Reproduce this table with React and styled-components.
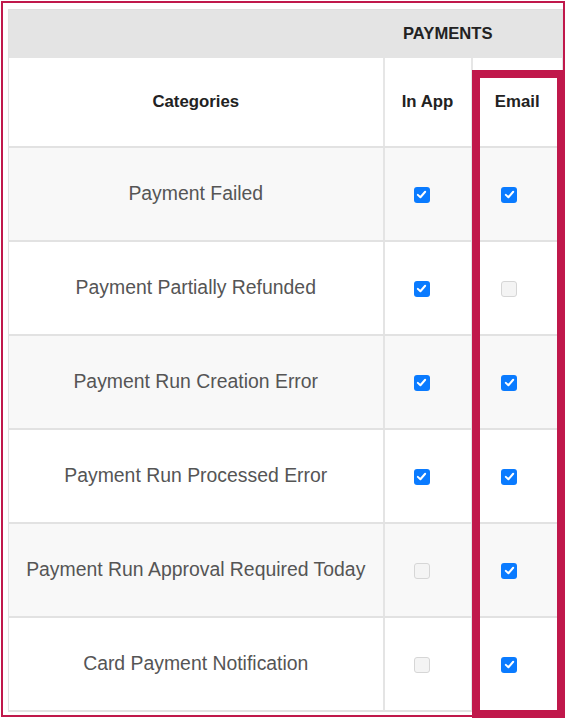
import React from 'react';
import styled, { createGlobalStyle } from 'styled-components';

const GlobalStyle = createGlobalStyle`
  body {
    margin: 0;
    background: #fff;
    font-family: "Liberation Sans", Arial, sans-serif;
  }
`;

const Frame = styled.div`
  position: relative;
  box-sizing: border-box;
  width: 564px;
  height: 716px;
  margin: 1px;
  border: 2px solid #c0184b;
  padding: 6px 1px 4px 5px;
`;

const Table = styled.table`
  width: 554px;
  border-collapse: collapse;
  table-layout: fixed;
  border: 1px solid #e0e0e0;
`;

const GroupRow = styled.tr`
  background: #e4e4e4;
  height: 48px;
`;

const GroupCell = styled.th`
  padding: 0 50px 0 0;
  font-size: 16.6px;
  font-weight: 700;
  color: #222;
  text-align: center;
`;

const HeadCell = styled.th`
  height: 88px;
  padding: 0;
  font-size: 16.8px;
  font-weight: 700;
  color: #222;
  text-align: center;
  border-right: 2px solid #e6e6e6;
  border-bottom: 2px solid #e2e2e2;
  &:last-child { border-right: none; }
`;

const Row = styled.tr`
  height: 94px;
  background: ${p => (p.$shaded ? '#f8f8f8' : '#fff')};
`;

const Cell = styled.td`
  text-align: center;
  font-size: 19.4px;
  color: #555;
  border-right: 2px solid #e4e4e4;
  border-bottom: 2px solid #e2e2e2;
  padding: 0 ${p => p.$padRight || 0}px 0 0;
  &:last-child { border-right: none; }
`;

const Box = styled.span`
  display: inline-flex;
  align-items: center;
  justify-content: center;
  box-sizing: border-box;
  width: 16px;
  height: 16px;
  border-radius: 3px;
  vertical-align: middle;
  background: ${p => (p.$on ? '#0a7bff' : '#f4f4f4')};
  border: ${p => (p.$on ? 'none' : '1.5px solid #d6d6d6')};
`;

const Highlight = styled.div`
  position: absolute;
  left: 469px;
  top: 67px;
  width: 93px;
  height: 648px;
  box-sizing: border-box;
  border: 8px solid #c0184b;
  pointer-events: none;
`;

const Check = ({ on }) => (
  <Box $on={on}>
    {on && (
      <svg width="11" height="11" viewBox="0 0 12 12">
        <path d="M2 6.4 L4.8 9 L10 3" fill="none" stroke="#fff" strokeWidth="2.2" strokeLinecap="round" strokeLinejoin="round" />
      </svg>
    )}
  </Box>
);

const rows = [
  ['Payment Failed', true, true],
  ['Payment Partially Refunded', true, false],
  ['Payment Run Creation Error', true, true],
  ['Payment Run Processed Error', true, true],
  ['Payment Run Approval Required Today', false, true],
  ['Card Payment Notification', false, true],
];

export default function App() {
  return (
    <>
      <GlobalStyle />
      <Frame>
        <Table>
          <colgroup>
            <col style={{ width: 375 }} />
            <col style={{ width: 88 }} />
            <col style={{ width: 91 }} />
          </colgroup>
          <thead>
            <GroupRow>
              <th />
              <GroupCell colSpan={2}>PAYMENTS</GroupCell>
            </GroupRow>
            <tr>
              <HeadCell>Categories</HeadCell>
              <HeadCell>In App</HeadCell>
              <HeadCell>Email</HeadCell>
            </tr>
          </thead>
          <tbody>
            {rows.map(([name, app, email], i) => (
              <Row key={name} $shaded={i % 2 === 0}>
                <Cell>{name}</Cell>
                <Cell $padRight={12}><Check on={app} /></Cell>
                <Cell $padRight={16}><Check on={email} /></Cell>
              </Row>
            ))}
          </tbody>
        </Table>
        <Highlight />
      </Frame>
    </>
  );
}
